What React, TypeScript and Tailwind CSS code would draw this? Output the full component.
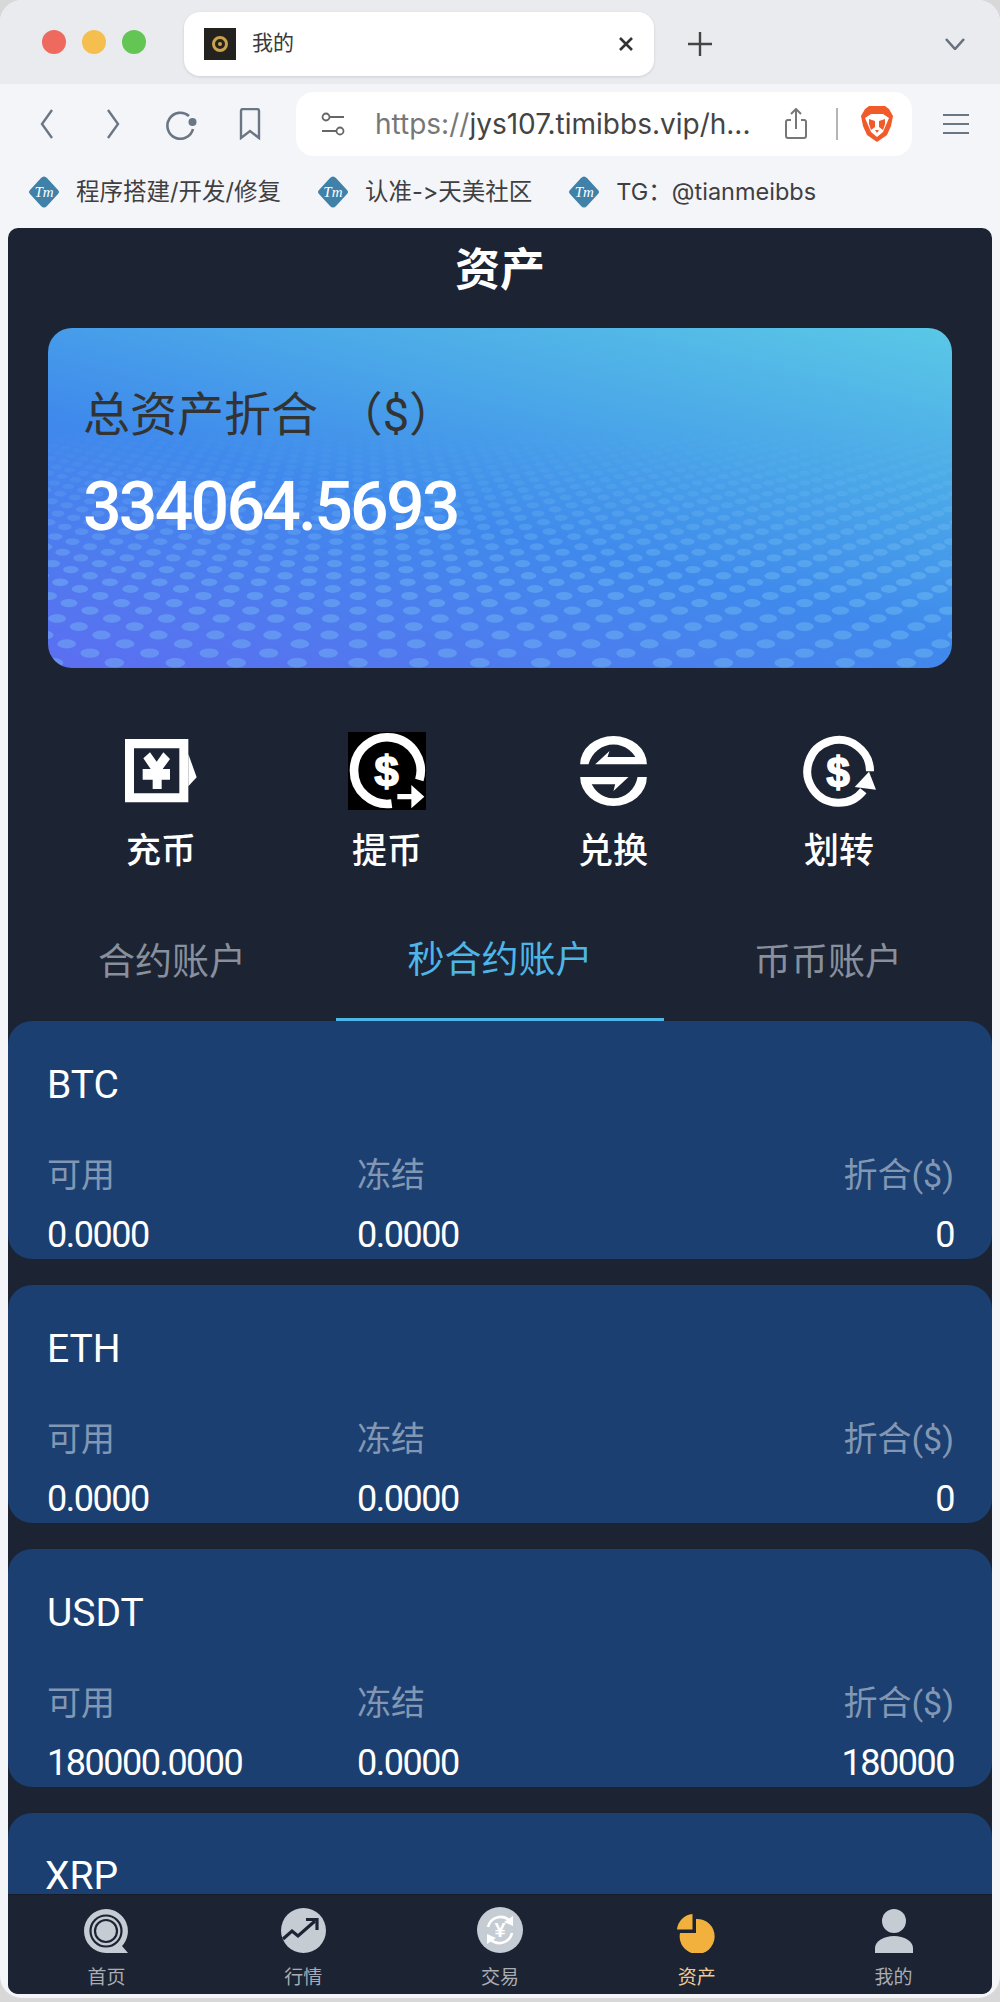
const CJK = "font-['Roboto','Noto_Sans_CJK_SC',sans-serif]";

// perspective dot field for the balance card
function buildDots() {
  const dots: { x: number; y: number; rx: number; o: number }[] = [];
  const s = 0.023;
  for (let i = -60; i <= 160; i++) {
    for (let j = -60; j <= 160; j++) {
      const z = (i + j) * s;
      if (z < 0.85 || z > 2.4) continue;
      const wx = (i - j) * s;
      const x = 310 + (1340 * wx) / z;
      const y = -100 + 440 / z;
      if (x < -12 || x > 916 || y > 350) continue;
      dots.push({ x, y, rx: 10 / z, o: 0.34 * Math.min(1, Math.max(0, (y - 100) / 150)) });
    }
  }
  return dots;
}
const DOTS = buildDots();

function DotField() {
  return (
    <svg className="absolute inset-0 h-full w-full" viewBox="0 0 904 340">
      {DOTS.map((d, i) => (
        <ellipse key={i} cx={d.x} cy={d.y} rx={d.rx} ry={d.rx * 0.48} fill="#85cdf6" opacity={d.o} />
      ))}
    </svg>
  );
}

function DollarText({ x, y, size }: { x: number; y: number; size: number }) {
  return (
    <text x={x} y={y} textAnchor="middle" fontSize={size} fontWeight="700" fontFamily="Liberation Sans" fill="#fff" stroke="#fff" strokeWidth="5">
      $
    </text>
  );
}

function ChargeIcon() {
  return (
    <svg width="72" height="64" viewBox="105 90 216 192">
      <path fillRule="evenodd" fill="#fff" d="M105 90H295V280H105Z M132 118V253H268V118Z" />
      <path fill="#fff" d="M295 135L320 205L295 232Z" />
      <path fill="#fff" d="M160 148L180 130L200 158L220 130L240 150L218 180H240V212H215V240H188V212H158V180H182Z" />
    </svg>
  );
}

function WithdrawIcon() {
  return (
    <svg width="78" height="78" viewBox="774 66 234 234">
      <rect x="774" y="66" width="234" height="234" fill="#000" />
      <path d="M988 210A100 100 0 1 0 905 281" fill="none" stroke="#fff" strokeWidth="26" />
      <DollarText x={890} y={228} size={130} />
      <path fill="#fff" d="M922 252H964V225L1003 260L964 295V268H922Z" />
    </svg>
  );
}

function ExchangeIcon() {
  return (
    <svg width="67" height="70" viewBox="180 75 200 210">
      <path fill="#fff" d="M180 160A100 85 0 0 1 380 160H355A78 82 0 0 0 205 160Z" />
      <path fill="#fff" d="M180 198A100 87 0 0 0 380 198H352A73 76 0 0 1 208 198Z" />
      <path fill="#fff" d="M225 160L268 120L262 138H355V160Z" />
      <path fill="#fff" d="M180 198H325L280 240L285 220H205V198Z" />
    </svg>
  );
}

function TransferIcon() {
  return (
    <svg width="73" height="73" viewBox="850 72 219 219">
      <path d="M1051 181A94 94 0 1 0 1031 239" fill="none" stroke="#fff" strokeWidth="24" />
      <path fill="#fff" d="M1005 228L1048 182L1069 236Z" />
      <DollarText x={955} y={228} size={125} />
    </svg>
  );
}

function HomeIcon() {
  return (
    <svg width="44" height="44" viewBox="0 0 44 44">
      <path fill="#c5ccd3" d="M22 0A22 22 0 0 1 38 37L44 44H22A22 22 0 0 1 22 0Z" />
      <circle cx="22" cy="22" r="15.5" fill="none" stroke="#1c2333" strokeWidth="2.2" />
      <circle cx="22" cy="22" r="11" fill="none" stroke="#1c2333" strokeWidth="2.2" />
      <path fill="#c5ccd3" d="M22 15L29 22L22 29L15 22Z" />
    </svg>
  );
}

function TrendIcon() {
  return (
    <svg width="45" height="45" viewBox="0 0 45 45">
      <circle cx="22.5" cy="22.5" r="22.5" fill="#c5ccd3" />
      <path d="M2 31L11 23L17 28L34 13" fill="none" stroke="#1c2333" strokeWidth="3.2" />
      <path d="M25 11.5H36V22" fill="none" stroke="#1c2333" strokeWidth="3.2" />
    </svg>
  );
}

function TradeIcon() {
  return (
    <svg width="46" height="46" viewBox="0 0 46 46">
      <circle cx="23" cy="23" r="23" fill="#c5ccd3" />
      <path d="M11 20A13 13 0 0 1 32 13" fill="none" stroke="#fff" strokeWidth="2.6" />
      <path fill="#fff" d="M36 9V19L27 15Z" />
      <path d="M35 26A13 13 0 0 1 14 33" fill="none" stroke="#fff" strokeWidth="2.6" />
      <path fill="#fff" d="M10 37V27L19 31Z" />
      <text x="23" y="30" textAnchor="middle" fontSize="20" fontWeight="700" fontFamily="Liberation Sans" fill="#fff">
        ¥
      </text>
    </svg>
  );
}

function PieIcon() {
  return (
    <svg className="blur-[0.5px]" width="40" height="40" viewBox="0 0 40 40">
      <path fill="#f2b13c" d="M19 6A17.5 17.5 0 1 1 3 20H19Z" />
      <path fill="#f2b13c" d="M15.500 1V16.500H0A17 17 0 0 1 15.500 1Z" />
    </svg>
  );
}

function UserIcon() {
  return (
    <svg width="38" height="44" viewBox="0 0 38 44">
      <circle cx="19" cy="12" r="12" fill="#c5ccd3" />
      <path fill="#c5ccd3" d="M0 44V39C0 32 9 27 19 27S38 32 38 39V44Z" />
    </svg>
  );
}

function BraveLion() {
  return (
    <svg width="32" height="36" viewBox="0 0 32 36">
      <path fill="#f15a29" d="M8 0H24L28 3L32 10L30 20L26 29L16 36L6 29L2 20L0 10L4 3Z" />
      <path fill="#fff" d="M4 12L10 8H22L28 12L25 19L22 26L16 31L10 26L7 19Z" />
      <path fill="#f15a29" d="M8 13L14 15V21L10 24L8 18ZM24 13L18 15V21L22 24L24 18ZM14 24H18L16 27Z" />
    </svg>
  );
}

function TmIcon() {
  return (
    <div className="relative h-[32px] w-[32px] shrink-0">
      <svg width="32" height="32" viewBox="0 0 32 32">
        <path fill="#3f81a9" d="M13 2Q16 -1 19 2L30 14Q32 16 30 18L19 30Q16 33 13 30L2 18Q0 16 2 14Z" />
      </svg>
      <span className="absolute inset-0 flex items-center justify-center font-['Liberation_Serif',serif] text-[15px] italic leading-none text-white">
        Tm
      </span>
    </div>
  );
}

function BrowserChrome() {
  const stroke = "#6b7685";
  return (
    <div className={`shrink-0 ${CJK}`}>
      <div className="flex h-[84px] items-center bg-[#e9ebef] pl-[42px]">
        <div className="flex gap-[16px]">
          <span className="h-[24px] w-[24px] rounded-full bg-[#ee6a5f]" />
          <span className="h-[24px] w-[24px] rounded-full bg-[#f5bf4f]" />
          <span className="h-[24px] w-[24px] rounded-full bg-[#62c554]" />
        </div>
        <div className="ml-[38px] mt-[4px] flex h-[64px] w-[470px] items-center rounded-[16px] bg-white pl-[20px] pr-[20px] shadow-[0_1px_3px_rgba(0,0,0,0.12)]">
          <div className="flex h-[32px] w-[32px] items-center justify-center bg-[#23221f]">
            <span className="flex h-[16px] w-[16px] items-center justify-center rounded-full border-[3px] border-[#c9a24b]">
              <span className="h-[4px] w-[4px] rounded-full bg-[#c9a24b]" />
            </span>
          </div>
          <span className="ml-[16px] text-[21px] text-[#3a3a3c]">我的</span>
          <svg className="ml-auto" width="16" height="16" viewBox="0 0 16 16">
            <path d="M2 2L14 14M14 2L2 14" stroke="#333" strokeWidth="2.6" />
          </svg>
        </div>
        <svg className="ml-[34px] mt-[4px]" width="24" height="24" viewBox="0 0 24 24">
          <path d="M12 0V24M0 12H24" stroke="#444" strokeWidth="2.4" />
        </svg>
        <svg className="ml-auto mr-[35px] mt-[4px]" width="20" height="12" viewBox="0 0 20 12">
          <path d="M1 1L10 11L19 1" fill="none" stroke="#68727f" strokeWidth="2.6" />
        </svg>
      </div>

      <div className="flex h-[72px] items-center bg-[#f4f5f8] pl-[14px] pt-[8px]">
        <div className="flex w-[66px] justify-center">
          <svg width="14" height="30" viewBox="0 0 14 30">
            <path d="M12 1L2 15L12 29" fill="none" stroke={stroke} strokeWidth="2.4" />
          </svg>
        </div>
        <div className="flex w-[66px] justify-center">
          <svg width="14" height="30" viewBox="0 0 14 30">
            <path d="M2 1L12 15L2 29" fill="none" stroke={stroke} strokeWidth="2.4" />
          </svg>
        </div>
        <div className="flex w-[70px] justify-center">
          <svg width="32" height="32" viewBox="0 0 32 32">
            <path d="M24 8A13 13 0 1 0 28 21" fill="none" stroke={stroke} strokeWidth="2.6" />
            <circle cx="27.500" cy="14" r="4" fill={stroke} />
          </svg>
        </div>
        <div className="flex w-[68px] justify-center">
          <svg width="24" height="32" viewBox="0 0 24 32">
            <path d="M3 3Q3 1 5 1H19Q21 1 21 3V30L12 23L3 30Z" fill="none" stroke={stroke} strokeWidth="2.4" />
          </svg>
        </div>
        <div className="ml-[12px] flex h-[64px] w-[616px] items-center rounded-[18px] bg-white">
          <svg className="ml-[25px]" width="24" height="24" viewBox="0 0 24 24">
            <circle cx="5" cy="5" r="3.500" fill="none" stroke="#666" strokeWidth="1.8" />
            <path d="M9 5H23M1 19H15" stroke="#666" strokeWidth="1.8" />
            <circle cx="19" cy="19" r="3.500" fill="none" stroke="#666" strokeWidth="1.8" />
          </svg>
          <span className="ml-[30px] w-[385px] whitespace-nowrap font-['Inter',sans-serif] text-[28px] text-[#444]">
            <span className="text-[#777]">https://</span>jys107.timibbs.vip/h...
          </span>
          <svg className="ml-[25px]" width="22" height="32" viewBox="0 0 22 32">
            <path d="M6 12H3Q1 12 1 14V28Q1 30 3 30H19Q21 30 21 28V14Q21 12 19 12H16M11 21V2M6 6L11 1L16 6" fill="none" stroke="#777" strokeWidth="2" />
          </svg>
          <span className="ml-[29px] h-[32px] w-[2px] bg-[#b5b5b5]" />
          <div className="ml-[23px] flex">
            <BraveLion />
          </div>
        </div>
        <div className="ml-[31px] flex w-[26px] flex-col gap-[6.500px]">
          <span className="h-[2.500px] bg-[#6b7685]" />
          <span className="h-[2.500px] bg-[#6b7685]" />
          <span className="h-[2.500px] bg-[#6b7685]" />
        </div>
      </div>

      <div className="flex h-[72px] items-center bg-[#f4f5f8] pl-[28px] font-['Inter','Noto_Sans_CJK_SC',sans-serif] text-[23.500px] text-[#3f3f41] [font-feature-settings:'calt'_0]">
        <TmIcon />
        <span className="ml-[16px] whitespace-nowrap">程序搭建/开发/修复</span>
        <div className="ml-[36px]">
          <TmIcon />
        </div>
        <span className="ml-[16px] whitespace-nowrap">认准-&gt;天美社区</span>
        <div className="ml-[36px]">
          <TmIcon />
        </div>
        <span className="ml-[16px] whitespace-nowrap">TG：@tianmeibbs</span>
      </div>
    </div>
  );
}

const actions = [
  { label: "充币", icon: <ChargeIcon /> },
  { label: "提币", icon: <WithdrawIcon /> },
  { label: "兑换", icon: <ExchangeIcon /> },
  { label: "划转", icon: <TransferIcon /> },
];

const accounts = [
  { name: "BTC", free: "0.0000", frozen: "0.0000", total: "0" },
  { name: "ETH", free: "0.0000", frozen: "0.0000", total: "0" },
  { name: "USDT", free: "180000.0000", frozen: "0.0000", total: "180000" },
];

function AccountCard({ name, free, frozen, total }: { name: string; free: string; frozen: string; total: string }) {
  return (
    <div className="h-[238px] shrink-0 rounded-[24px] bg-[#1b3f70] pl-[39px] pr-[38px] pt-[38px]">
      <div className="h-[52px] text-[39px] leading-[52px] text-white">{name}</div>
      <div className="mt-[44px] grid h-[40px] grid-cols-[310px_1fr_1fr] text-[34px] leading-[40px] text-[#8297b3]">
        <span>可用</span>
        <span>冻结</span>
        <span className="text-right">折合($)</span>
      </div>
      <div className="mt-[20px] grid h-[40px] grid-cols-[310px_1fr_1fr] text-[36px] leading-[40px] tracking-[-1.500px] text-white">
        <span>{free}</span>
        <span>{frozen}</span>
        <span className="text-right">{total}</span>
      </div>
    </div>
  );
}

const navItems = [
  { label: "首页", icon: <HomeIcon /> },
  { label: "行情", icon: <TrendIcon /> },
  { label: "交易", icon: <TradeIcon /> },
  { label: "资产", icon: <PieIcon />, active: true },
  { label: "我的", icon: <UserIcon /> },
];

export default function App() {
  return (
    <div className="h-[2002px] w-[1000px] overflow-hidden bg-[#d8d8d8]">
      <div className={`flex h-[1998px] flex-col overflow-hidden rounded-[22px] bg-[#f4f5f8] ${CJK}`}>
        <BrowserChrome />
        <div className="mx-[8px] mb-[4px] flex min-h-0 flex-1 flex-col overflow-hidden rounded-[10px] bg-[#1c2333]">
          <div className="min-h-0 flex-1 overflow-hidden">
            <div className="h-[80px] pt-[3px] text-center text-[45px] font-bold leading-[80px] text-white">资产</div>

            <div className="mx-[40px] mt-[20px]">
              <div className="relative h-[340px] overflow-hidden rounded-[24px] bg-[linear-gradient(14deg,#5c6ef1_0%,#3f8aec_45%,#4ba8e8_70%,#5ac8e6_100%)]">
                <DotField />
                <div className="relative pl-[35px]">
                  <div className="pt-[56px] text-[47px] leading-[62px] text-[#333]">总资产折合 <span className="ml-[6px]">（$）</span></div>
                  <div className="mt-[26px] text-[68px] font-medium leading-[70px] tracking-[-2.800px] text-white">334064.5693</div>
                </div>
              </div>
            </div>

            <div className="mx-[40px] mt-[64px] grid grid-cols-4">
              {actions.map((a) => (
                <div key={a.label} className="flex flex-col items-center">
                  <div className="flex h-[78px] items-center justify-center">{a.icon}</div>
                  <div className="mt-[20px] h-[44px] text-[35px] font-medium leading-[44px] text-white">{a.label}</div>
                </div>
              ))}
            </div>

            <div className="mt-[26px] grid grid-cols-3">
              <div className="flex h-[121px] items-center justify-center pt-[4px] text-[37px] text-[#87909c]">合约账户</div>
              <div className="flex h-[121px] items-center justify-center border-b-[3px] border-[#4db5e8] pt-[4px] text-[37px] text-[#4db5e8]">秒合约账户</div>
              <div className="flex h-[121px] items-center justify-center pt-[4px] text-[37px] text-[#87909c]">币币账户</div>
            </div>

            <div className="flex flex-col gap-[26px]">
              {accounts.map((a) => (
                <AccountCard key={a.name} {...a} />
              ))}
              {/* last card runs under the tab bar, only its title shows */}
              <div className="h-[238px] shrink-0 rounded-[24px] bg-[#1b3f70] pl-[37px] pt-[37px]">
                <div className="h-[52px] text-[39px] leading-[52px] text-white">XRP</div>
              </div>
            </div>
          </div>

          <div className="grid h-[100px] shrink-0 grid-cols-5 border-t border-[#171c2a] bg-[#1c2333]">
            {navItems.map((n) => (
              <div key={n.label} className="flex flex-col items-center">
                <div className="flex h-[61px] items-end justify-center pb-[3px]">{n.icon}</div>
                <div className={`mt-[9px] text-[19px] leading-[26px] ${n.active ? "text-[#f0c990]" : "text-[#a9acb1]"}`}>{n.label}</div>
              </div>
            ))}
          </div>
        </div>
      </div>
    </div>
  );
}
